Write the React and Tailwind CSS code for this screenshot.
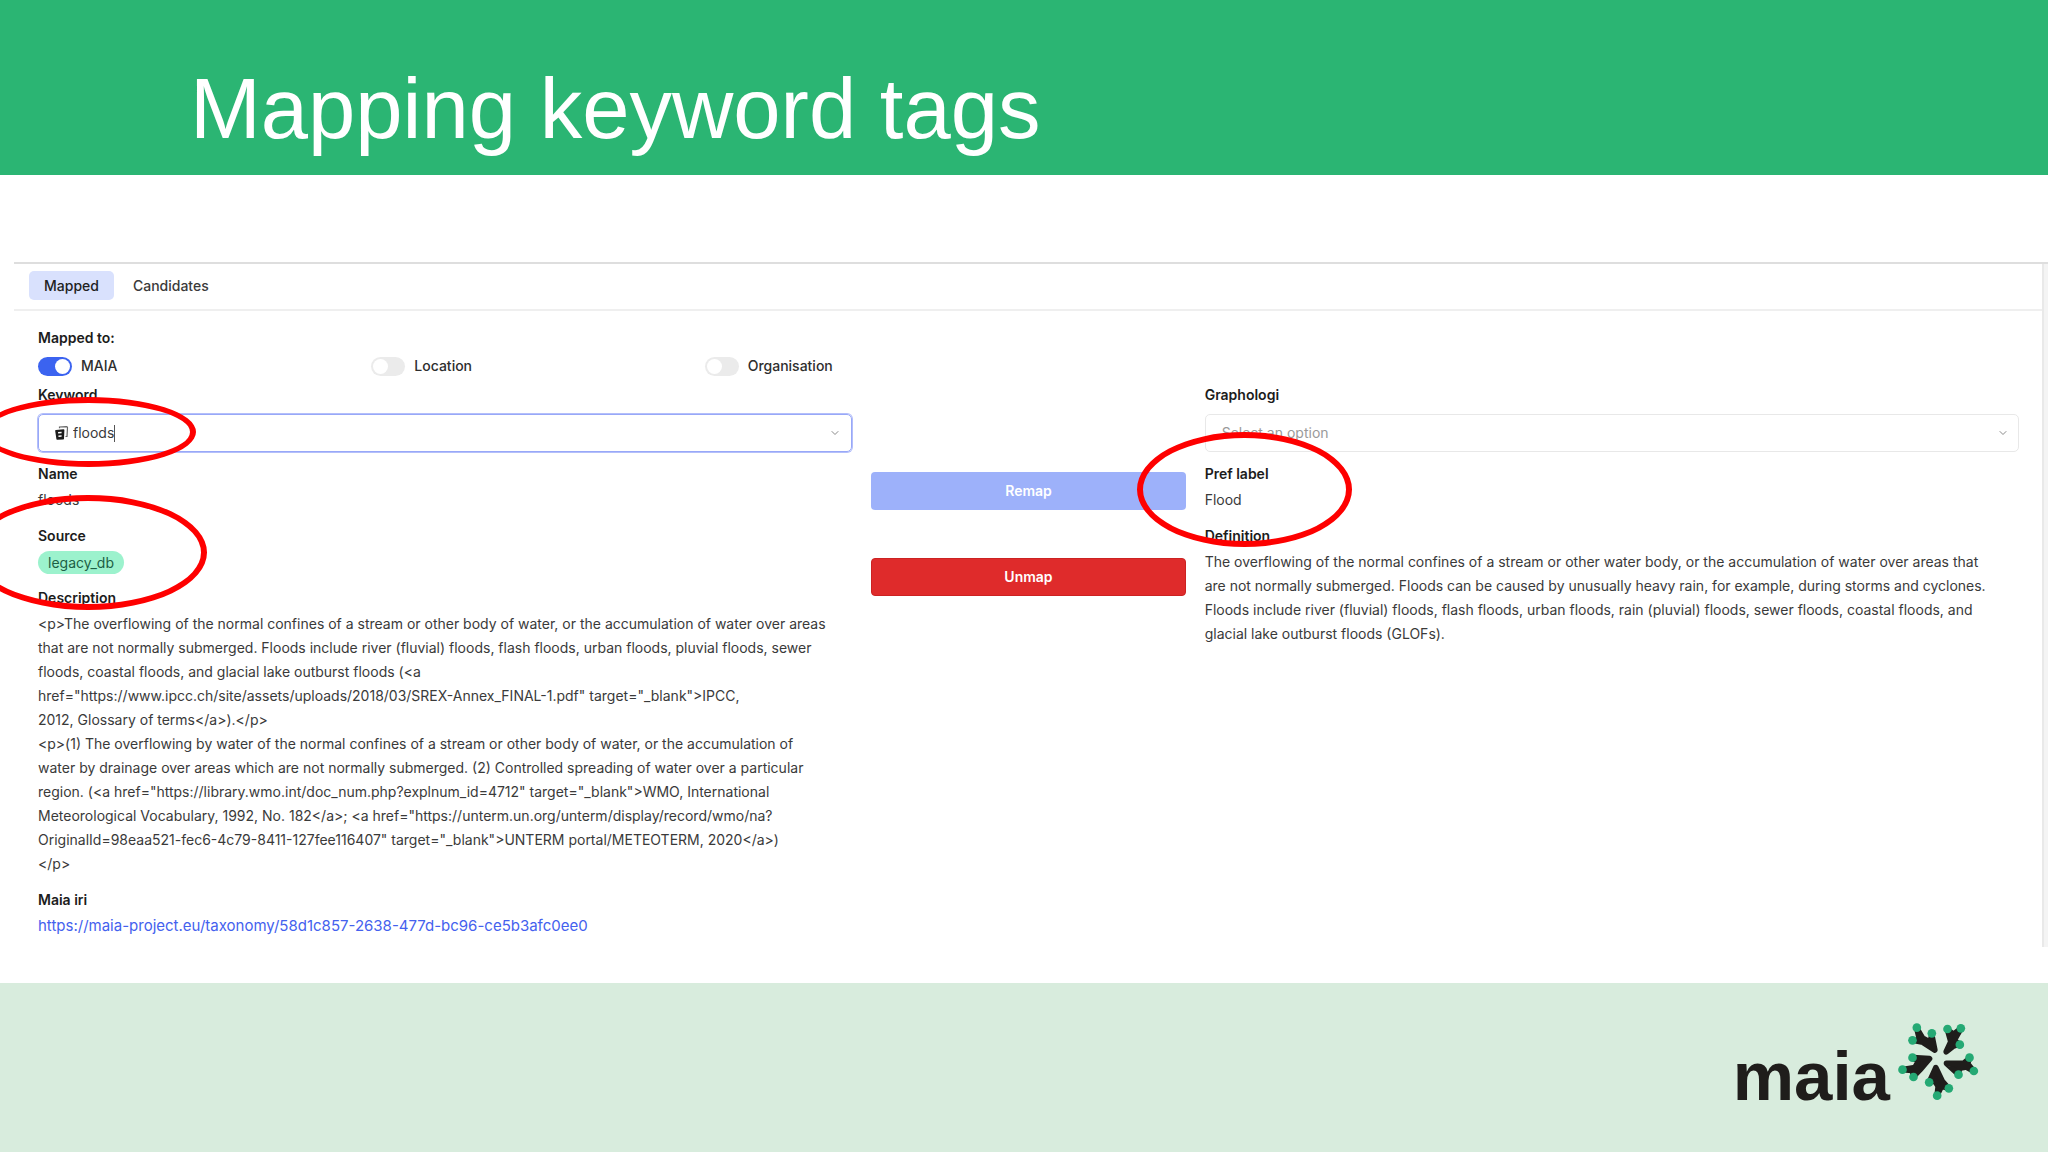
import { ChevronDown } from "lucide-react";

const descriptionLines = [
  "<p>The overflowing of the normal confines of a stream or other body of water, or the accumulation of water over areas",
  "that are not normally submerged. Floods include river (fluvial) floods, flash floods, urban floods, pluvial floods, sewer",
  "floods, coastal floods, and glacial lake outburst floods (<a",
  'href="https://www.ipcc.ch/site/assets/uploads/2018/03/SREX-Annex_FINAL-1.pdf" target="_blank">IPCC,',
  "2012, Glossary of terms</a>).</p>",
  "<p>(1) The overflowing by water of the normal confines of a stream or other body of water, or the accumulation of",
  "water by drainage over areas which are not normally submerged. (2) Controlled spreading of water over a particular",
  'region. (<a href="https://library.wmo.int/doc_num.php?explnum_id=4712" target="_blank">WMO, International',
  'Meteorological Vocabulary, 1992, No. 182</a>; <a href="https://unterm.un.org/unterm/display/record/wmo/na?',
  'OriginalId=98eaa521-fec6-4c79-8411-127fee116407" target="_blank">UNTERM portal/METEOTERM, 2020</a>)',
  "</p>",
];

const definitionLines = [
  "The overflowing of the normal confines of a stream or other water body, or the accumulation of water over areas that",
  "are not normally submerged. Floods can be caused by unusually heavy rain, for example, during storms and cyclones.",
  "Floods include river (fluvial) floods, flash floods, urban floods, rain (pluvial) floods, sewer floods, coastal floods, and",
  "glacial lake outburst floods (GLOFs).",
];

function Lines({ lines }) {
  return (
    <p className="whitespace-nowrap">
      {lines.map((line) => (
        <span key={line} className="block">
          {line}
        </span>
      ))}
    </p>
  );
}

function Field({ label, children }) {
  return (
    <section className="relative flex flex-col gap-0.5">
      <h3 className="font-semibold text-[#1c1c1c]">{label}</h3>
      {children}
    </section>
  );
}

function Toggle({ label, defaultChecked }) {
  return (
    <label className="col-span-2 flex h-6 items-center gap-[9px] font-medium text-[#2e2e2e]">
      <input
        type="checkbox"
        role="switch"
        defaultChecked={defaultChecked}
        className="h-[19px] w-[34px] appearance-none rounded-full bg-[#ebebeb] p-0.5 before:block before:size-[15px] before:rounded-full before:bg-white checked:bg-[#3b63f0] checked:before:translate-x-[15px]"
      />
      {label}
    </label>
  );
}

function Ring({ className }) {
  return <span aria-hidden="true" className={`pointer-events-none absolute z-10 rounded-[50%] border-[6px] border-[#fe0000] ${className}`} />;
}

function KeywordIcon() {
  return (
    <svg viewBox="0 0 14 14" className="size-[14px] shrink-0" aria-hidden="true">
      <path d="M4.500 2.200V1l7-.3c.6 0 1 .3 1 .9L12 10.500h-1.500" fill="none" stroke="#666" strokeWidth="1.200" />
      <path d="M1 4l7.500-.8c.6 0 .9.300.9.800L9 12.500c0 .6-.4 1-1 1l-5.500.300c-.6 0-1-.3-1.100-.9L.2 5c0-.5.200-1 .8-1z" fill="#1c1c1c" />
      <path d="M3 6l3.600-.2v1.400L3.200 7.400zM3.400 9.500l3.200-.2v1.400l-3.100.200z" fill="#fff" />
    </svg>
  );
}

const markDots = [
  [80, 40], [125, 57], [67, 78],
  [172, 44], [212, 42], [209, 91],
  [67, 130], [37, 166], [70, 188],
  [238, 130], [251, 170], [205, 181],
  [117, 204], [176, 222], [141, 244],
];

function MaiaMark() {
  return (
    <svg viewBox="24 26 242 234" className="mb-[11px] h-[78px] w-[81px]" aria-hidden="true">
      <g stroke="#1f1d1b" strokeWidth="17" strokeLinecap="round" strokeLinejoin="round" fill="#1f1d1b">
        <path d="M134 107L125 62L120 84L98 72L80 42L88 76L68 78L98 84Z" />
        <path d="M168 112L182 82L172 46L190 60L212 43L192 78L207 90L190 95Z" />
        <path d="M118 133L68 130L84 142L74 160L38 166L66 168L70 187L90 166Z" />
        <path d="M169 147L205 180L208 162L228 158L250 170L232 148L238 132L222 146Z" />
        <path d="M137 160L118 202L134 200L144 216L141 242L154 216L175 222L156 200Z" />
      </g>
      <g fill="#25a974">
        {markDots.map(([cx, cy]) => (
          <circle key={`${cx}-${cy}`} cx={cx} cy={cy} r="13" />
        ))}
      </g>
    </svg>
  );
}

export default function App() {
  return (
    <div className="flex min-h-screen flex-col bg-white font-['Inter',sans-serif] text-[14px] leading-6 text-[#3a3a3a]">
      <header className="flex h-[175px] items-end bg-[#2bb573] px-[190px] pb-[18px]">
        <h1 className="font-['Liberation_Sans',Arial,sans-serif] text-[85px] leading-[96px] text-white">Mapping keyword tags</h1>
      </header>

      <main className="flex-1 overflow-hidden pt-[87px] pl-3.5">
        <div className="flex min-h-[685px] border-t-2 border-[#dedede]">
          <div className="flex-1">
            <nav className="flex h-[47px] items-center gap-1 border-b-2 border-[#efefef] px-[15px] pb-0.5 font-medium">
              <button type="button" className="h-[29px] rounded-[5px] bg-[#d9e1fd] px-[15px] text-[#222]">Mapped</button>
              <button type="button" className="h-[29px] px-[15px]">Candidates</button>
            </nav>

            <div className="pt-[15px] pr-[23px] pl-6">
              <h2 className="font-semibold text-[#1c1c1c]">Mapped to:</h2>
              <div className="mt-1 grid grid-cols-12 gap-x-[19px]">
                <Toggle label="MAIA" defaultChecked />
                <Toggle label="Location" />
                <Toggle label="Organisation" />
              </div>

              <div className="mt-[5px] grid grid-cols-12 gap-x-[19px]">
                <div className="col-span-5 flex flex-col gap-3">
                  <div className="relative mb-[-2px]">
                    <label htmlFor="keyword" className="block font-semibold text-[#1c1c1c]">Keyword</label>
                    <div className="mt-[7px] flex h-[38px] items-center gap-1 rounded-[5px] border border-[#98a8f8] pr-2.5 pl-4 ring-1 ring-[#b4bffa]">
                      <KeywordIcon />
                      <span className="flex flex-1 items-center">
                        <input id="keyword" defaultValue="floods" className="field-sizing-content bg-transparent outline-none" />
                        <span aria-hidden="true" className="h-[17px] w-px bg-[#555]" />
                      </span>
                      <ChevronDown className="size-3 text-[#8a8a8a]" />
                    </div>
                    <Ring className="top-[14px] left-[-57px] h-[70px] w-[215px]" />
                  </div>
                  <Field label="Name">
                    <p>floods</p>
                  </Field>
                  <Field label="Source">
                    <p className="flex h-6 items-center">
                      <span className="rounded-full bg-[#9cf2cd] px-2.5 leading-[23px] text-[#1c5f45]">legacy_db</span>
                    </p>
                    <Ring className="top-[-29px] left-[-69px] h-[115px] w-[238px]" />
                  </Field>
                  <Field label="Description">
                    <Lines lines={descriptionLines} />
                  </Field>
                  <Field label="Maia iri">
                    <a
                      href="https://maia-project.eu/taxonomy/58d1c857-2638-477d-bc96-ce5b3afc0ee0"
                      className="text-[15px] text-[#4461ee]"
                    >
                      https://maia-project.eu/taxonomy/58d1c857-2638-477d-bc96-ce5b3afc0ee0
                    </a>
                  </Field>
                </div>

                <div className="col-span-2 flex flex-col gap-12 pt-[89px] font-semibold text-white">
                  <button type="button" className="h-[38px] rounded-[4px] bg-[#9db1fa]">Remap</button>
                  <button type="button" className="h-[38px] rounded-[4px] border border-[#cc2222] bg-[#df2b2b]">Unmap</button>
                </div>

                <div className="col-span-5 flex flex-col gap-3">
                  <div className="mb-[-2px]">
                    <label htmlFor="graphologi" className="block font-semibold text-[#1c1c1c]">Graphologi</label>
                    <div className="relative mt-[7px]">
                      <select id="graphologi" className="block h-[38px] w-full appearance-none rounded-[5px] border border-[#e8e8e8] px-4 text-[#9a9a9a]">
                        <option>Select an option</option>
                      </select>
                      <ChevronDown className="pointer-events-none absolute top-[13px] right-2.5 size-3 text-[#8a8a8a]" />
                    </div>
                  </div>
                  <Field label="Pref label">
                    <p>Flood</p>
                    <Ring className="top-[-30px] left-[-68px] h-[115px] w-[215px]" />
                  </Field>
                  <Field label="Definition">
                    <Lines lines={definitionLines} />
                  </Field>
                </div>
              </div>
            </div>
          </div>
          <div className="w-1.5 border-l-2 border-[#e9e9e9] bg-[#f4f4f4]" />
        </div>
      </main>

      <footer className="flex h-[169px] items-end justify-end gap-2 bg-[#d8ecdd] pr-[69px] pb-10">
        <span className="font-['Liberation_Sans',Arial,sans-serif] text-[69px] leading-[70px] font-bold text-[#1f1d1b]">maia</span>
        <MaiaMark />
      </footer>
    </div>
  );
}
